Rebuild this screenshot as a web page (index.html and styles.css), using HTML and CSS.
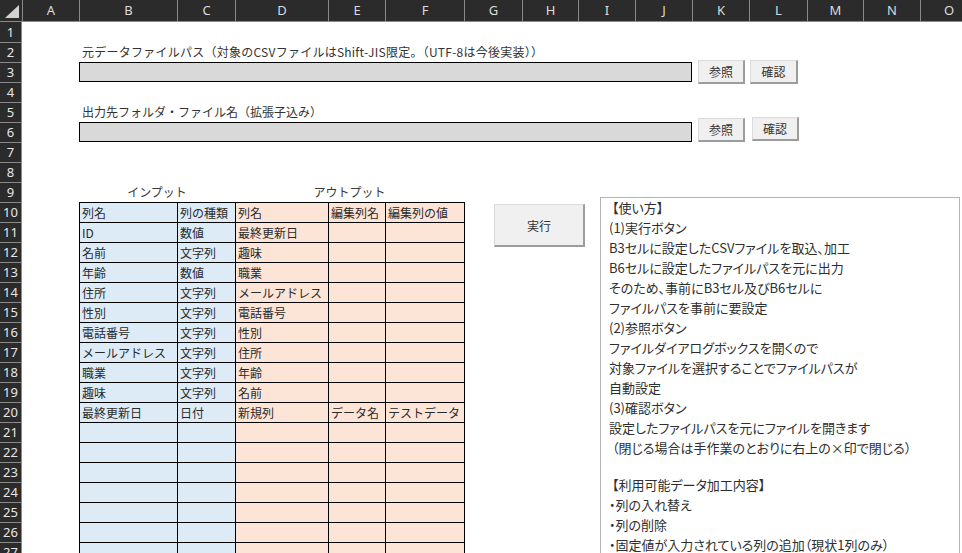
FILE: index.html
```html
<!doctype html>
<html lang="ja">
<head>
    <meta charset="UTF-8">
    <title>CSV加工ツール</title>
    <link rel="stylesheet" href="styles.css">
</head>
<body>
    <div class="excel">
        <div class="corner">
            <svg width="22" height="22" viewBox="0 0 22 22"><polygon points="5,18 19,18 19,5" fill="#d2d2d2"/></svg>
        </div>

        <div class="col-heads">
            <div class="ch" style="width:57px">A</div>
            <div class="ch" style="width:98px">B</div>
            <div class="ch" style="width:58px">C</div>
            <div class="ch" style="width:93px">D</div>
            <div class="ch" style="width:57px">E</div>
            <div class="ch" style="width:79px">F</div>
            <div class="ch" style="width:58px">G</div>
            <div class="ch" style="width:56px">H</div>
            <div class="ch" style="width:57px">I</div>
            <div class="ch" style="width:57px">J</div>
            <div class="ch" style="width:57px">K</div>
            <div class="ch" style="width:58px">L</div>
            <div class="ch" style="width:56px">M</div>
            <div class="ch" style="width:57px">N</div>
            <div class="ch" style="width:57px">O</div>
        </div>

        <div class="row-heads" id="row-heads"></div>

        <div class="sheet">
            <div class="label label-long row-2">元データファイルパス（対象のCSVファイルはShift-JIS限定。（UTF-8は今後実装））</div>
            <div class="path-box row-3"></div>
            <div class="label row-5">出力先フォルダ・ファイル名（拡張子込み）</div>
            <div class="path-box row-6"></div>

            <div class="caption caption-in">インプット</div>
            <div class="caption caption-out">アウトプット</div>

            <div class="grid-table" id="grid-table"></div>

            <!-- シート上のボタン・テキストボックス -->
            <div class="btn btn-ref1">参照</div>
            <div class="btn btn-chk1">確認</div>
            <div class="btn btn-ref2">参照</div>
            <div class="btn btn-chk2">確認</div>
            <div class="btn btn-run">実行</div>

            <div class="help">
                <div class="help-text">
                    <div class="bracket">【使い方】</div>
                    <div>(1)実行ボタン</div>
                    <div>B3セルに設定したCSVファイルを取込、加工</div>
                    <div>B6セルに設定したファイルパスを元に出力</div>
                    <div>そのため、事前にB3セル及びB6セルに</div>
                    <div>ファイルパスを事前に要設定</div>
                    <div>(2)参照ボタン</div>
                    <div>ファイルダイアログボックスを開くので</div>
                    <div>対象ファイルを選択することでファイルパスが</div>
                    <div>自動設定</div>
                    <div>(3)確認ボタン</div>
                    <div>設定したファイルパスを元にファイルを開きます</div>
                    <div class="bracket">（閉じる場合は手作業のとおりに右上の×印で閉じる）</div>
                    <div class="blank"></div>
                    <div class="bracket">【利用可能データ加工内容】</div>
                    <div>・列の入れ替え</div>
                    <div>・列の削除</div>
                    <div>・固定値が入力されている列の追加（現状1列のみ）</div>
                </div>
            </div>
        </div>
    </div>

    <script>
        const heads = document.getElementById("row-heads");
        for (let i = 1; i <= 27; i++) {
            const rh = document.createElement("div");
            rh.classList.add("rh");
            rh.textContent = i;
            heads.appendChild(rh);
        }

        // B10:F27
        const rows = [
            ["列名", "列の種類", "列名", "編集列名", "編集列の値"],
            ["ID", "数値", "最終更新日", "", ""],
            ["名前", "文字列", "趣味", "", ""],
            ["年齢", "数値", "職業", "", ""],
            ["住所", "文字列", "メールアドレス", "", ""],
            ["性別", "文字列", "電話番号", "", ""],
            ["電話番号", "文字列", "性別", "", ""],
            ["メールアドレス", "文字列", "住所", "", ""],
            ["職業", "文字列", "年齢", "", ""],
            ["趣味", "文字列", "名前", "", ""],
            ["最終更新日", "日付", "新規列", "データ名", "テストデータ"]
        ];
        while (rows.length < 18) rows.push(["", "", "", "", ""]);

        const table = document.getElementById("grid-table");
        rows.forEach(row => {
            row.forEach((text, col) => {
                const cell = document.createElement("div");
                cell.classList.add("cell", col < 2 ? "cell-in" : "cell-out");
                cell.textContent = text;
                table.appendChild(cell);
            });
        });
    </script>
</body>
</html>
```

FILE: styles.css
```css
body {
    margin: 0;
    background-color: #ffffff;
    overflow: hidden;
    font-family: "Noto Sans CJK JP", sans-serif;
}

.excel {
    display: grid;
    grid-template-columns: 22px 1fr;
    grid-template-rows: 22px 1fr;
    height: 553px;
    overflow: hidden;
}

.corner {
    background-color: #2b2b2b;
    border-bottom: 1px solid #8a8a8a;
    box-sizing: border-box;
}

.corner svg {
    display: block;
}

.col-heads {
    display: flex;
    background-color: #2b2b2b;
    border-bottom: 1px solid #8a8a8a;
    box-sizing: border-box;
    overflow: hidden;
}

.ch {
    flex-shrink: 0;
    box-sizing: border-box;
    border-left: 1px solid #8a8a8a;
    color: #dcdcdc;
    font-family: "Noto Sans", sans-serif;
    font-size: 13px;
    line-height: 21px;
    text-align: center;
}

.row-heads {
    background-color: #2b2b2b;
    overflow: hidden;
}

.rh {
    height: 20px;
    box-sizing: border-box;
    border-top: 1px solid #8a8a8a;
    border-right: 1px solid #8a8a8a;
    color: #e6e6e6;
    font-family: "Noto Sans", sans-serif;
    font-size: 13px;
    line-height: 19px;
    text-align: center;
}

.rh:first-child {
    border-top: none;
    line-height: 20px;
}

.sheet {
    position: relative;
    display: grid;
    grid-template-columns: 57px 98px 58px 93px 57px 79px 58px 56px 57px 57px 57px 58px 56px 57px 57px;
    grid-template-rows: repeat(27, 20px);
    overflow: hidden;
}

.label {
    grid-column: 2 / 12;
    padding-left: 3px;
    color: #333333;
    font-size: 12px;
    line-height: 20px;
    white-space: nowrap;
}

.label-long {
    letter-spacing: 0.25px;
}

.row-2 { grid-row: 2; }
.row-3 { grid-row: 3; }
.row-5 { grid-row: 5; }
.row-6 { grid-row: 6; }

.path-box {
    grid-column: 2 / 11;
    background-color: #d9d9d9;
    border: 1px solid #000000;
    box-sizing: border-box;
}

.caption {
    grid-row: 9;
    color: #3a3a3a;
    font-size: 12px;
    line-height: 20px;
    text-align: center;
}

.caption-in { grid-column: 2 / 4; }
.caption-out { grid-column: 4 / 7; }

.grid-table {
    grid-column: 2 / 8;
    grid-row: 10 / 28;
    justify-self: start;
    align-self: start;
    display: grid;
    grid-template-columns: 97px 57px 92px 56px 78px;
    grid-auto-rows: 19px;
    gap: 1px;
    padding: 1px;
    background-color: #000000;
}

.cell {
    padding-left: 2px;
    color: #2a2a2a;
    font-size: 12px;
    line-height: 19px;
    white-space: nowrap;
    overflow: hidden;
}

.cell-in { background-color: #ddebf7; }
.cell-out { background-color: #fce4d6; }

.btn {
    position: absolute;
    box-sizing: border-box;
    display: flex;
    align-items: center;
    justify-content: center;
    background-color: #f0f0f0;
    border-top: 1px solid #dadada;
    border-left: 1px solid #dadada;
    border-right: 2px solid #9c9c9c;
    border-bottom: 2px solid #9c9c9c;
    color: #333333;
    font-size: 12px;
}

.btn-ref1 { left: 676px; top: 38px; width: 47px; height: 24px; }
.btn-chk1 { left: 728px; top: 38px; width: 48px; height: 24px; }
.btn-ref2 { left: 676px; top: 96px; width: 47px; height: 24px; }
.btn-chk2 { left: 730px; top: 95px; width: 47px; height: 24px; }
.btn-run  { left: 472px; top: 182px; width: 91px; height: 43px; }

.help {
    position: absolute;
    left: 578px;
    top: 175px;
    width: 360px;
    height: 420px;
    box-sizing: border-box;
    border: 1px solid #b4b4b4;
    background-color: #ffffff;
    padding-left: 8px;
}

.help-text {
    color: #2e2e2e;
    font-size: 13px;
    line-height: 20px;
    font-feature-settings: "palt";
    white-space: nowrap;
}

.help-text .bracket {
    margin-left: 3px;
}

.help-text .blank {
    height: 17px;
}
```
